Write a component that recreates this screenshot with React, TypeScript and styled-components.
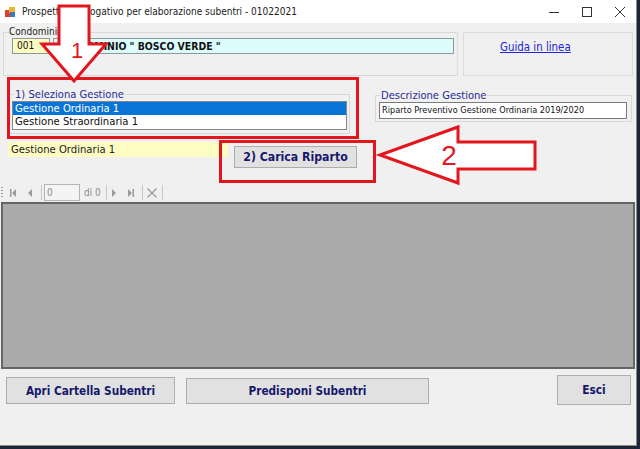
import React from 'react'
import styled, { createGlobalStyle } from 'styled-components'

const GlobalStyle = createGlobalStyle`
    html, body {
        margin: 0;
        padding: 0;
        background: #1d2636;
        width: 640px;
        height: 449px;
        overflow: hidden;
    }
    * {
        box-sizing: border-box;
    }
`

const FONT = `"DejaVu Sans Condensed", "DejaVu Sans", "Liberation Sans", sans-serif`
const LABEL_BLUE = '#2a2a92'
const NAVY = '#16186b'
const RED = '#e3161d'

const Window = styled.div`
    position: relative;
    width: 637px;
    height: 446px;
    background: #f0f0f0;
    border-right: 1px solid #8a8a8a;
    border-bottom: 1px solid #8a8a8a;
    display: flex;
    flex-direction: column;
    font-family: ${FONT};
    overflow: hidden;
`
const TitleBar = styled.div`
    height: 23px;
    flex: none;
    background: #ffffff;
    display: flex;
    align-items: center;
    padding-left: 5px;
`
const TitleText = styled.div`
    margin-left: 7px;
    font-size: 10px;
    color: #1a1a1a;
    flex: 1;
    white-space: nowrap;
`
const WinButton = styled.div`
    width: 33px;
    height: 23px;
    display: flex;
    align-items: center;
    justify-content: center;
    color: #222;
`
const TopRow = styled.div`
    height: 54px;
    flex: none;
    display: flex;
    align-items: flex-start;
    padding: 3px 0 0 3px;
`
const Group = styled.fieldset<{ $w: number; $h?: number }>`
    margin: 0;
    width: ${p => p.$w}px;
    height: ${p => (p.$h ? `${p.$h}px` : 'auto')};
    border: 1px solid #d9d9d9;
    padding: 0 3px 3px 3px;
    min-width: 0;
`
const SmallLegend = styled.legend`
    font-size: 10px;
    line-height: 12px;
    color: #1a1a1a;
    padding: 0;
    margin-left: 2px;
`
const BlueLegend = styled.legend`
    font-size: 11.1px;
    line-height: 13px;
    color: ${LABEL_BLUE};
    padding: 0 1px;
    margin-left: 1px;
`
const FieldRow = styled.div`
    display: flex;
    gap: 3px;
    margin-left: 5px;
`
const Field = styled.div<{ $bg: string; $w?: number; $bold?: boolean }>`
    height: 16px;
    width: ${p => (p.$w ? `${p.$w}px` : 'auto')};
    flex: ${p => (p.$w ? 'none' : '1')};
    background: ${p => p.$bg};
    border: 1px solid #8c9a9a;
    font-size: ${p => (p.$bold ? '10.4px' : '10px')};
    font-weight: ${p => (p.$bold ? 700 : 400)};
    line-height: 14px;
    padding-left: ${p => (p.$bold ? 2 : 4)}px;
    color: #111;
    white-space: nowrap;
    overflow: hidden;
`
const HelpPanel = styled.div`
    margin: 6px 0 0 5px;
    width: 170px;
    height: 44px;
    border: 1px solid #dcdcdc;
    padding: 3px 0 0 36px;
`
const HelpLink = styled.a`
    font-size: 11.4px;
    color: #2323d8;
    text-decoration: underline;
    cursor: pointer;
`
const SecondRow = styled.div`
    height: 63px;
    flex: none;
    display: flex;
    align-items: flex-start;
    padding: 11px 0 0 9px;
`
const ListBox = styled.div`
    width: 335px;
    height: 29px;
    margin-left: -1px;
    background: #ffffff;
    border: 1px solid #828790;
    display: flex;
    flex-direction: column;
`
const ListItem = styled.div<{ $selected?: boolean }>`
    height: 13px;
    font-size: 11.2px;
    line-height: 13px;
    padding-left: 2px;
    background: ${p => (p.$selected ? '#0a74d6' : 'transparent')};
    color: ${p => (p.$selected ? '#ffffff' : '#111')};
`
const DescGroup = styled(Group)`
    margin: 1px 0 0 25px;
    padding: 0 4px 2px 3px;
`
const DescBox = styled.div`
    height: 17px;
    background: #fff;
    border: 1px solid #7a7a7a;
    font-size: 9.1px;
    line-height: 15px;
    padding-left: 2px;
    color: #111;
    white-space: nowrap;
`
const ThirdRow = styled.div`
    height: 43px;
    flex: none;
    display: flex;
    align-items: flex-start;
    padding-left: 8px;
`
const YellowLabel = styled.div`
    margin-top: 2px;
    width: 220px;
    height: 15px;
    background: #fdfdc3;
    font-size: 11.2px;
    line-height: 15px;
    padding-left: 3px;
    color: #222;
`
const Button = styled.button<{ $w: number; $h: number; $top: number; $size?: number }>`
    margin-top: ${p => p.$top}px;
    width: ${p => p.$w}px;
    height: ${p => p.$h}px;
    background: #e1e1e1;
    border: 1px solid #adadad;
    font-family: ${FONT};
    font-weight: 700;
    font-size: ${p => p.$size ?? 11.7}px;
    color: ${NAVY};
    padding: 0;
    flex: none;
    white-space: nowrap;
`
const CaricaButton = styled(Button)`
    margin-left: 6px;
`
const NavBar = styled.div`
    height: 19px;
    flex: none;
    display: flex;
    align-items: center;
    padding-left: 1px;
    color: #9a9a9a;
`
const Grip = styled.div`
    width: 2px;
    height: 11px;
    background: repeating-linear-gradient(to bottom, #a0a0a0 0 1px, transparent 1px 3px);
`
const NavIcon = styled.div<{ $ml: number }>`
    margin-left: ${p => p.$ml}px;
    display: flex;
    align-items: center;
`
const NavSep = styled.div<{ $ml: number }>`
    margin-left: ${p => p.$ml}px;
    width: 1px;
    height: 15px;
    background: #c8c8c8;
`
const NavInput = styled.div`
    margin-left: 2px;
    width: 36px;
    height: 17px;
    border: 1px solid #b5b5b5;
    background: #f4f4f4;
    font-size: 10px;
    line-height: 15px;
    padding-left: 2px;
    color: #888;
`
const NavText = styled.div`
    margin-left: 4px;
    font-size: 10px;
    color: #8a8a8a;
`
const Grid = styled.div`
    height: 167px;
    flex: none;
    margin: 0 1px 0 1px;
    background: #ababab;
    border: 2px solid #666;
`
const BottomRow = styled.div`
    flex: 1;
    display: flex;
    align-items: flex-start;
    padding: 6px 5px 0 6px;
    gap: 11px;
`
const Spacer = styled.div`
    flex: 1;
`
const RedBox = styled.div<{ $x: number; $y: number; $w: number; $h: number }>`
    position: absolute;
    left: ${p => p.$x}px;
    top: ${p => p.$y}px;
    width: ${p => p.$w}px;
    height: ${p => p.$h}px;
    border: 3px solid ${RED};
    pointer-events: none;
`
const ArrowSvg = styled.svg<{ $x: number; $y: number }>`
    position: absolute;
    left: ${p => p.$x}px;
    top: ${p => p.$y}px;
    overflow: visible;
    pointer-events: none;
`

const AppIcon = () => (
    <svg width="10" height="10" viewBox="0 0 10 10">
        <rect x="0" y="3" width="6" height="7" fill="#d9412b" />
        <rect x="4" y="0" width="6" height="6" fill="#f0b030" />
        <rect x="5" y="5" width="5" height="5" fill="#3a78c8" />
    </svg>
)

const App = () => {
    return (
        <>
            <GlobalStyle />
            <Window>
                <TitleBar>
                    <AppIcon />
                    <TitleText>Prospetto riepilogativo per elaborazione subentri - 01022021</TitleText>
                    <WinButton>
                        <svg width="10" height="10" viewBox="0 0 10 10"><line x1="0" y1="5.5" x2="10" y2="5.5" stroke="#333" strokeWidth="1" /></svg>
                    </WinButton>
                    <WinButton>
                        <svg width="10" height="10" viewBox="0 0 10 10"><rect x="0.5" y="0.5" width="9" height="9" fill="none" stroke="#333" strokeWidth="1" /></svg>
                    </WinButton>
                    <WinButton>
                        <svg width="10" height="10" viewBox="0 0 10 10"><path d="M0 0 L10 10 M10 0 L0 10" stroke="#333" strokeWidth="1" /></svg>
                    </WinButton>
                </TitleBar>

                <TopRow>
                    <Group $w={455} $h={50}>
                        <SmallLegend>Condominio</SmallLegend>
                        <FieldRow>
                            <Field $bg="#fdfdc3" $w={38}>001</Field>
                            <Field $bg="#dcfcfc" $bold>CONDOMINIO " BOSCO VERDE "</Field>
                        </FieldRow>
                    </Group>
                    <HelpPanel>
                        <HelpLink>Guida in linea</HelpLink>
                    </HelpPanel>
                </TopRow>

                <SecondRow>
                    <Group $w={341} $h={46}>
                        <BlueLegend>1) Seleziona Gestione</BlueLegend>
                        <ListBox>
                            <ListItem $selected>Gestione Ordinaria 1</ListItem>
                            <ListItem>Gestione Straordinaria 1</ListItem>
                        </ListBox>
                    </Group>
                    <DescGroup $w={257}>
                        <BlueLegend>Descrizione Gestione</BlueLegend>
                        <DescBox>Riparto Preventivo Gestione Ordinaria 2019/2020</DescBox>
                    </DescGroup>
                </SecondRow>

                <ThirdRow>
                    <YellowLabel>Gestione Ordinaria 1</YellowLabel>
                    <CaricaButton $w={123} $h={22} $top={6} $size={12.2}>2) Carica Riparto</CaricaButton>
                </ThirdRow>

                <NavBar>
                    <Grip />
                    <NavIcon $ml={7}>
                        <svg width="6" height="8" viewBox="0 0 6 8"><rect x="0" y="0" width="1.5" height="8" fill="currentColor" /><path d="M6 0 L2 4 L6 8 Z" fill="currentColor" /></svg>
                    </NavIcon>
                    <NavIcon $ml={12}>
                        <svg width="4" height="8" viewBox="0 0 4 8"><path d="M4 0 L0 4 L4 8 Z" fill="currentColor" /></svg>
                    </NavIcon>
                    <NavSep $ml={9} />
                    <NavInput>0</NavInput>
                    <NavText>di 0</NavText>
                    <NavSep $ml={5} />
                    <NavIcon $ml={5}>
                        <svg width="4" height="8" viewBox="0 0 4 8"><path d="M0 0 L4 4 L0 8 Z" fill="currentColor" /></svg>
                    </NavIcon>
                    <NavIcon $ml={12}>
                        <svg width="6" height="8" viewBox="0 0 6 8"><path d="M0 0 L4 4 L0 8 Z" fill="currentColor" /><rect x="4.5" y="0" width="1.5" height="8" fill="currentColor" /></svg>
                    </NavIcon>
                    <NavSep $ml={8} />
                    <NavIcon $ml={4}>
                        <svg width="10" height="10" viewBox="0 0 10 10"><path d="M0.5 0.5 L9.5 9.5 M9.5 0.5 L0.5 9.5" stroke="currentColor" strokeWidth="1.3" /></svg>
                    </NavIcon>
                    <NavSep $ml={5} />
                </NavBar>

                <Grid />

                <BottomRow>
                    <Button $w={169} $h={27} $top={2}>Apri Cartella Subentri</Button>
                    <Button $w={243} $h={26} $top={3}>Predisponi Subentri</Button>
                    <Spacer />
                    <Button $w={74} $h={30} $top={0}>Esci</Button>
                </BottomRow>

                <RedBox $x={7} $y={77} $w={352} $h={62} />
                <RedBox $x={219} $y={140} $w={157} $h={43} />

                <ArrowSvg $x={40} $y={3} width="70" height="82" viewBox="0 0 70 82">
                    <polygon points="19,3 49,3 49,41 66,41 34,78 2,41 19,41" fill="#ffffff" stroke={RED} strokeWidth="3" strokeLinejoin="miter" />
                    <text x="37" y="55" textAnchor="middle" fontFamily="Liberation Sans, sans-serif" fontSize="22" fill={RED}>1</text>
                </ArrowSvg>
                <ArrowSvg $x={375} $y={122} width="165" height="65" viewBox="0 0 165 65">
                    <polygon points="5,33 83,5 83,20 160,20 160,47 83,47 83,61" fill="#ffffff" stroke={RED} strokeWidth="3" strokeLinejoin="miter" />
                    <text x="74" y="43" textAnchor="middle" fontFamily="Liberation Sans, sans-serif" fontSize="28" fill={RED}>2</text>
                </ArrowSvg>
            </Window>
        </>
    )
}

export default App
